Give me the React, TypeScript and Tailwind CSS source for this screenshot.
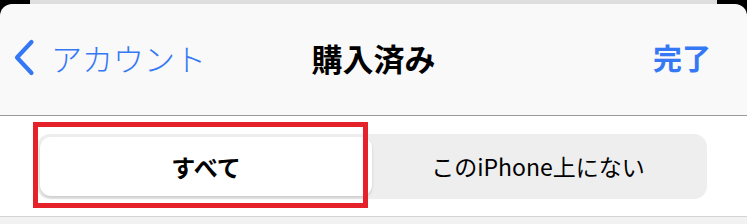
const jp = { fontFamily: '"Noto Sans CJK JP", "Noto Sans", sans-serif' };

const BackChevron = () => (
  <svg width="22" height="37" viewBox="0 0 22 37" fill="none">
    <path d="M18.5 3 L4 18.5 L18.5 34" stroke="#3478f6" strokeWidth="4.2" strokeLinecap="round" strokeLinejoin="round" />
  </svg>
);

const App = () => {
  return (
    <div className="h-[224px] w-[747px] overflow-hidden bg-black" style={jp}>
      <div className="mx-[30px] h-[4px] bg-[#dedede]" />
      <div className="overflow-hidden rounded-t-[12px] bg-[#f9f9f9]">
        <header className="grid h-[112px] grid-cols-[1fr_auto_1fr] items-center border-b border-[#9a9a9a] pb-[4px]">
          <button className="flex items-center gap-[16px] pl-[13px] text-[#3478f6]">
            <BackChevron />
            <span className="text-[31px] font-light leading-none">アカウント</span>
          </button>
          <h1 className="text-[31px] font-bold leading-none text-black">購入済み</h1>
          <div className="flex justify-end pr-[36px]">
            <button className="text-[29px] font-bold leading-none text-[#3478f6]">完了</button>
          </div>
        </header>

        <section className="relative border-b border-[#d4d4d4] bg-white pb-[17px] pl-[37px] pr-[40px] pt-[18px]">
          <div className="grid h-[65px] grid-cols-2 rounded-[13px] bg-[#eeeeef] p-[3px]">
            <div className="flex items-center justify-center rounded-[11px] bg-white shadow-[0_2px_3px_rgba(0,0,0,0.14)]">
              <span className="text-[24px] font-bold text-black">すべて</span>
            </div>
            <div className="flex items-center justify-center">
              <span className="text-[23px] text-black">このiPhone上にない</span>
            </div>
          </div>
          <div className="absolute left-[33px] top-[6px] h-[86px] w-[335px] border-[5px] border-[#e52129]" />
        </section>
        <div className="h-[10px] bg-[#f2f2f2]" />
      </div>
    </div>
  );
};

export default App;
